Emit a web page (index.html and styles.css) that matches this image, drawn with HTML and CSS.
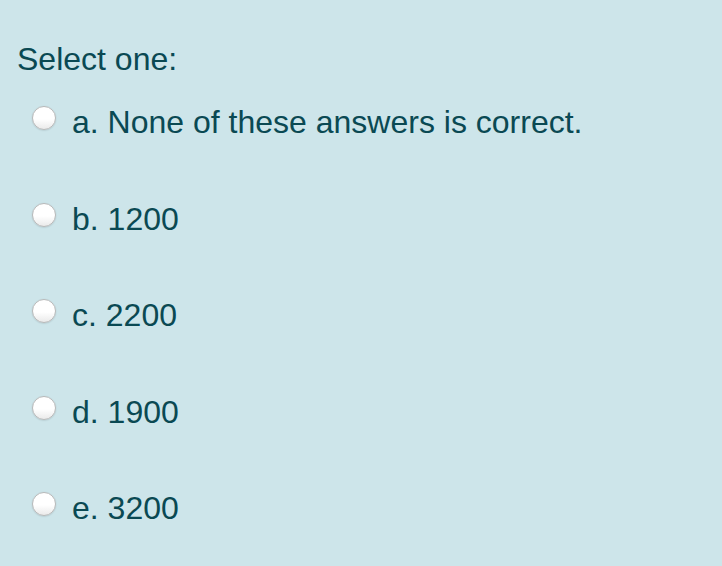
FILE: index.html
```html
<!DOCTYPE html>
<html lang="en">
<head>
<meta charset="utf-8">
<title>Select one</title>
<link rel="stylesheet" href="styles.css">
</head>
<body>
<div class="question">
  <div class="prompt">Select one:</div>
  <div class="answers">
    <label class="option"><span class="radio"></span><span class="text">a. None of these answers is correct.</span></label>
    <label class="option"><span class="radio"></span><span class="text">b. 1200</span></label>
    <label class="option"><span class="radio"></span><span class="text">c. 2200</span></label>
    <label class="option"><span class="radio"></span><span class="text">d. 1900</span></label>
    <label class="option"><span class="radio"></span><span class="text">e. 3200</span></label>
  </div>
</div>
</body>
</html>
```
FILE: styles.css
```css
html, body {
  margin: 0;
  padding: 0;
  background: #cde5ea;
}
body {
  width: 722px;
  height: 566px;
  overflow: hidden;
  font-family: "Liberation Sans", Arial, sans-serif;
  font-size: 32px;
  line-height: 36px;
  color: #0a4953;
}
.question {
  padding: 41px 0 0 17px;
}
.prompt {
  height: 36px;
}
.answers {
  margin-top: 27px;
  display: flex;
  flex-direction: column;
  gap: 60.5px;
}
.option {
  display: flex;
  align-items: flex-start;
  height: 36px;
}
.radio {
  box-sizing: border-box;
  width: 24px;
  height: 24px;
  margin: 2px 0 0 15px;
  border-radius: 50%;
  border: 1px solid #b9b9b9;
  background: linear-gradient(#ffffff 0%, #ffffff 55%, #eaeaea 100%);
  box-shadow: 0 0.5px 1.5px rgba(0,0,0,0.15);
  flex: none;
}
.text {
  margin-left: 16px;
}
```
